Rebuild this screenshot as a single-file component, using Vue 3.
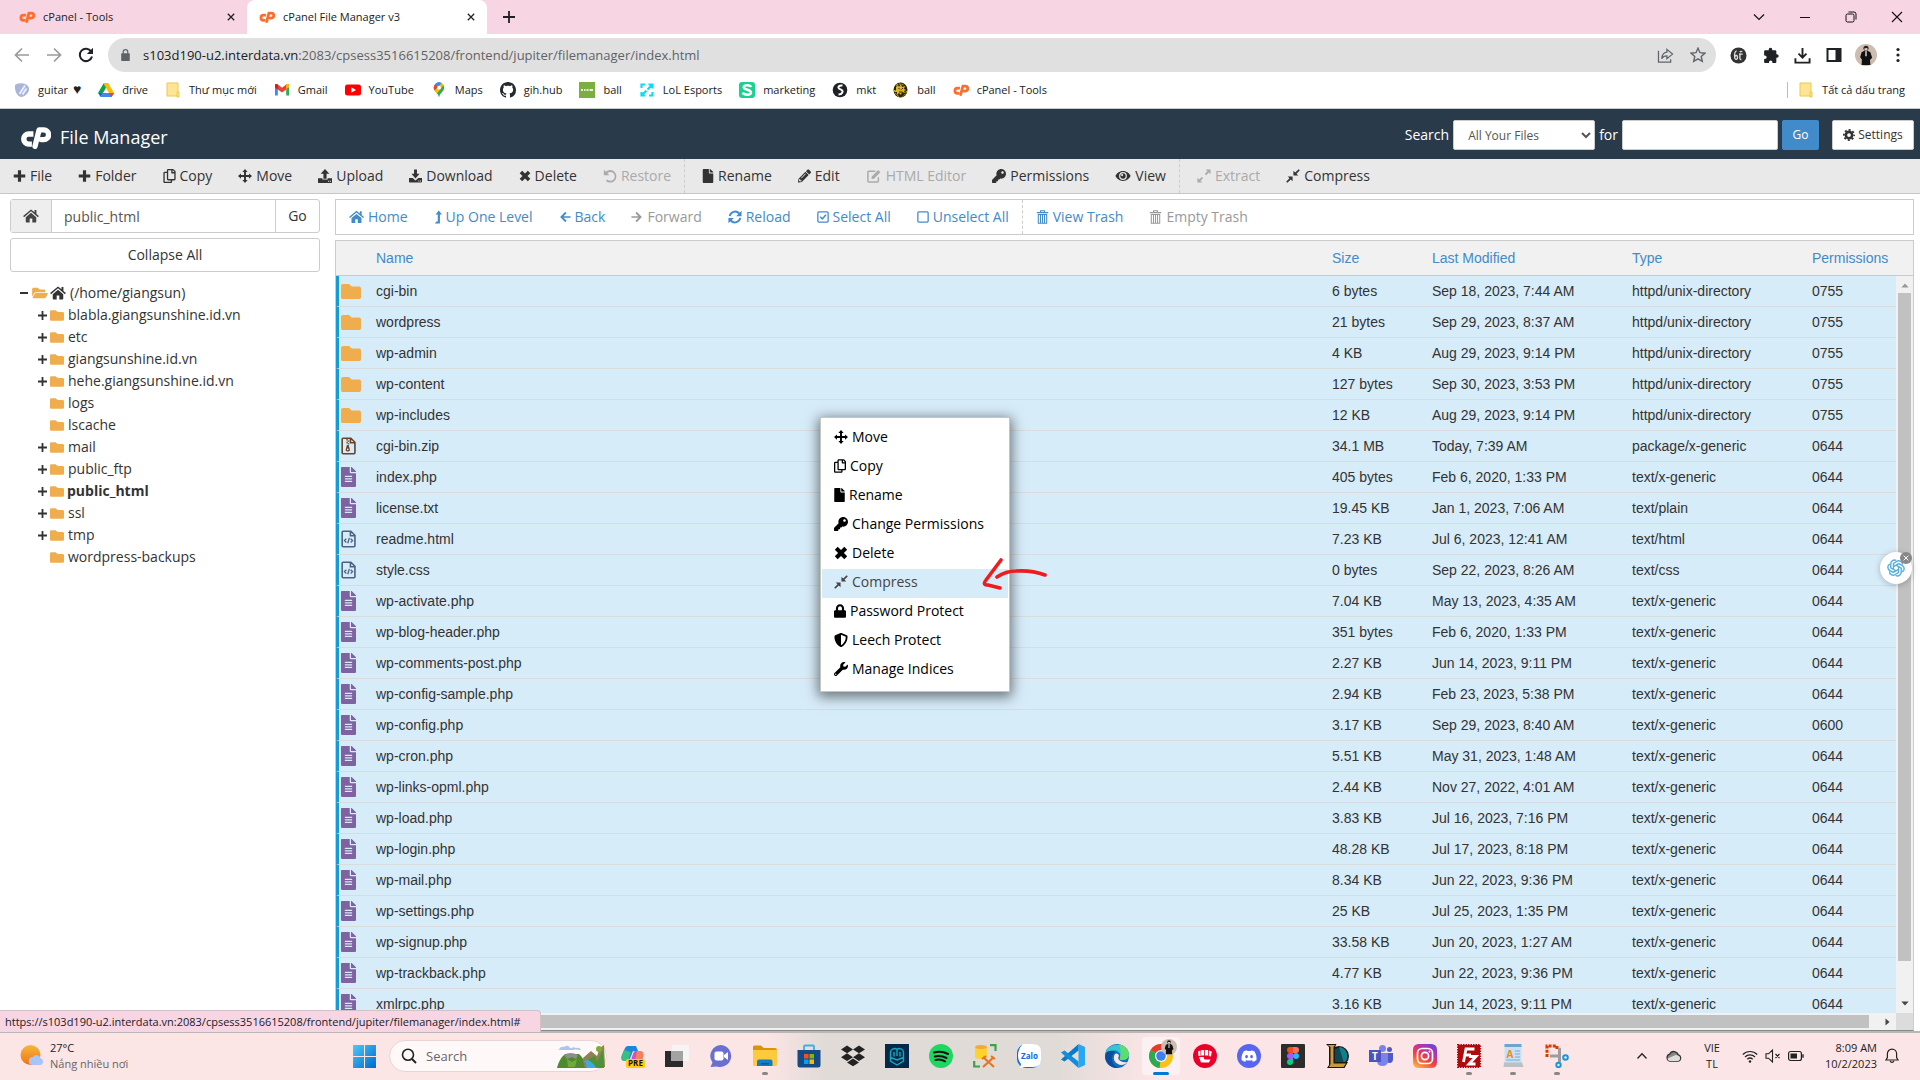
<script setup>
import { h } from 'vue'

const CP = '<g fill="none" stroke="currentColor" stroke-width="5.2" stroke-linejoin="round"><path d="M13 7.600H8.500a4.900 4.900 0 0 0 0 9.800H11.500"/><path d="M14.500 19.500 18.500 3.600H23a4.700 4.700 0 0 1 0 9.400H20.500" stroke-linecap="round"/></g>'
const DOC = '<path d="M224 136V0H24C10.700 0 0 10.700 0 24v464c0 13.300 10.700 24 24 24h336c13.300 0 24-10.700 24-24V160H248c-13.200 0-24-10.800-24-24z'
const SHEET = '<path d="M2 1.200h7.200l3.800 3.800v9.800a.9.9 0 0 1-.9.9H2a.9.9 0 0 1-.9-.9V2.100a.9.9 0 0 1 .9-.9zM8.800 1.200v4.200H13" fill="none" stroke="currentColor" stroke-width="1.500"/>'
const AVATAR = '<circle cx="10" cy="10" r="10" fill="#cdbcb0"/><circle cx="10" cy="3.800" r="2.300" fill="#26201f"/><path d="M8.600 3.800h2.800v2.400H8.600z" fill="#e6cdbb"/><path d="M6 7.500l3-1.500h2l3 1.500 1.600 5-2 2 .4 4.500H6l.3-5-1.600-2z" fill="#111"/><path d="M9.400 6.200h1.200v5H9.400z" fill="#eee"/>'

// name: [viewBox, markup]
const icons = {
  cp: ['0 0 30 22', CP],
  plus: ['0 0 14 14', '<path d="M5.300.8h3.400v4.500h4.500v3.400H8.700v4.500H5.300V8.700H.8V5.300h4.500z"/>'],
  treeplus: ['0 0 10 10', '<path d="M4 0h2v4h4v2H6v4H4V6H0V4h4z"/>'],
  treeminus: ['0 0 10 10', '<path d="M1 4h8v2H1z"/>'],
  copy: ['0 0 448 512', '<path d="M433.941 65.941l-51.882-51.882A48 48 0 0 0 348.118 0H176c-26.510 0-48 21.490-48 48v48H48c-26.510 0-48 21.490-48 48v320c0 26.510 21.490 48 48 48h224c26.510 0 48-21.490 48-48v-48h80c26.510 0 48-21.490 48-48V99.882a48 48 0 0 0-14.059-33.941zM266 464H54a6 6 0 0 1-6-6V150a6 6 0 0 1 6-6h74v224c0 26.510 21.490 48 48 48h96v42a6 6 0 0 1-6 6zm128-96H182a6 6 0 0 1-6-6V54a6 6 0 0 1 6-6h106v88c0 13.255 10.745 24 24 24h88v202a6 6 0 0 1-6 6zm6-256h-64V48h9.632c1.591 0 3.117.632 4.243 1.757l48.368 48.368a6 6 0 0 1 1.757 4.243V112z"/>'],
  move: ['0 0 16 16', '<path d="M8 0l3 3.400H9.100v3.500h3.500V5L16 8l-3.400 3V9.100H9.100v3.500H11L8 16l-3-3.400h1.900V9.100H3.400V11L0 8l3.400-3v1.900h3.500V3.400H5z"/>'],
  upload: ['0 0 16 16', '<path d="M8 0l5 5.400h-3.200V11H6.200V5.400H3z"/><path d="M0 10.500h5V12h6v-1.500h5V15a1 1 0 0 1-1 1H1a1 1 0 0 1-1-1z"/><path d="M11.500 13.500h1.200v1.200h-1.200zM13.500 13.500h1.200v1.200h-1.200z" fill="#e9e9e9"/>'],
  download: ['0 0 16 16', '<path d="M6.200 0h3.600v5.200H13L8 11 3 5.200h3.200z"/><path d="M0 10.500h4.500L8 13.500l3.500-3H16V15a1 1 0 0 1-1 1H1a1 1 0 0 1-1-1z"/><path d="M11.500 13.500h1.200v1.200h-1.200zM13.500 13.500h1.200v1.200h-1.200z" fill="#e9e9e9"/>'],
  times: ['0 0 14 14', '<path d="M3.700.8L7 4.100 10.300.8l2.900 2.900L9.900 7l3.300 3.300-2.900 2.900L7 9.900l-3.300 3.300L.8 10.300 4.100 7 .8 3.700z"/>'],
  undo: ['0 0 16 16', '<path d="M1 .8V7h6.200L5 4.800A5 5 0 1 1 5 12l-1.700 1.700A7.200 7.200 0 1 0 3.300 3z"/>'],
  file: ['0 0 384 512', DOC + 'm160-14.100v6.100H256V0h6.100c6.400 0 12.500 2.500 17 7l97.900 98c4.500 4.500 7 10.600 7 16.900z"/>'],
  pencil: ['0 0 512 512', '<path d="M497.900 142.100l-46.100 46.100c-4.700 4.700-12.300 4.700-17 0l-111-111c-4.700-4.700-4.700-12.300 0-17l46.100-46.100c18.700-18.700 49.100-18.700 67.900 0l60.100 60.100c18.800 18.700 18.800 49.100 0 67.900zM284.200 99.800L21.600 362.400.4 483.900c-2.900 16.400 11.400 30.600 27.800 27.800l121.500-21.300 262.600-262.600c4.700-4.700 4.700-12.300 0-17l-111-111c-4.800-4.700-12.400-4.700-17.100 0zM124.100 339.900c-5.500-5.500-5.500-14.300 0-19.800l154-154c5.500-5.500 14.300-5.500 19.800 0s5.500 14.300 0 19.800l-154 154c-5.500 5.500-14.300 5.500-19.800 0zM88 424h48v36.300l-64.500 11.300-31.100-31.100L51.700 376H88v48z"/>'],
  editbox: ['0 0 16 16', '<path d="M9.500 2.500H2.200A1.200 1.200 0 0 0 1 3.700v10a1.200 1.200 0 0 0 1.200 1.200h9.600a1.200 1.200 0 0 0 1.200-1.200V9.500" fill="none" stroke="currentColor" stroke-width="1.700"/><path d="M5 11.500l.5-3L12.800 1.200l2.400 2.400L8 11z"/>'],
  key: ['0 0 512 512', '<path d="M512 176.001C512 273.203 433.202 352 336 352c-11.220 0-22.190-1.062-32.827-3.069l-24.012 27.014A23.999 23.999 0 0 1 261.223 384H224v40c0 13.255-10.745 24-24 24h-40v40c0 13.255-10.745 24-24 24H24c-13.255 0-24-10.745-24-24v-78.059c0-6.365 2.529-12.470 7.029-16.971l161.802-161.802C163.108 213.814 160 195.271 160 176 160 78.798 238.797.001 335.999 0 433.488-.001 512 78.511 512 176.001zM336 128c0 26.510 21.490 48 48 48s48-21.490 48-48-21.490-48-48-48-48 21.490-48 48z"/>'],
  eye: ['0 0 18 14', '<path d="M9 1.500C4.800 1.500 1.600 4.500.5 7c1.100 2.500 4.300 5.500 8.500 5.500s7.400-3 8.500-5.500C16.400 4.500 13.200 1.500 9 1.500z"/><circle cx="9" cy="7" r="4.400" fill="#e9e9e9"/><circle cx="9" cy="7" r="3"/><circle cx="8" cy="6" r="1.200" fill="#e9e9e9"/>'],
  expand: ['0 0 16 16', '<path d="M10 .5h5.500V6l-2-2-3 3L9 5.500l3-3zM6 15.500H.5V10l2 2 3-3L7 10.500l-3 3z"/>'],
  compress: ['0 0 16 16', '<path d="M8.500 7.500V2l2 2L14.500.2l1.300 1.300L12 5.500l2 2zM7.500 8.500V14l-2-2-4 3.800-1.300-1.300L4 10.500l-2-2z"/>'],
  home: ['0 0 18 16', '<path d="M9 4.300l6 5V14.500a.8.8 0 0 1-.8.8h-3.700v-4.500h-3v4.500H3.800a.8.800 0 0 1-.8-.8V9.300z"/><path d="M9 .5L13 3.800V1.200h2.200v4.500L18 8l-1.100 1.300L9 2.700 1.100 9.300 0 8z"/>'],
  levelup: ['0 0 10 16', '<path d="M6 0l4 5H7.400v11H1l2-2.300h1.700V5H2z"/>'],
  left: ['0 0 14 14', '<path d="M7.300 1L8.800 2.500 5.300 6H13.500v2H5.300l3.500 3.500L7.300 13l-6-6z"/>'],
  right: ['0 0 14 14', '<path d="M6.700 1L5.200 2.500 8.700 6H.5v2h8.200l-3.500 3.500L6.700 13l6-6z"/>'],
  reload: ['0 0 16 16', '<path d="M2 7A6.200 6.200 0 0 1 12.800 4M14 9A6.200 6.200 0 0 1 3.200 12" fill="none" stroke="currentColor" stroke-width="2.200"/><path d="M15.500.8V7H9.300zM.5 15.200V9h6.200z"/>'],
  check: ['0 0 14 14', '<rect x="1" y="1" width="12" height="12" rx="1.200" fill="none" stroke="currentColor" stroke-width="1.500"/><path d="M3.800 6.800L6.200 9.300 10.500 4.500" fill="none" stroke="currentColor" stroke-width="1.800"/>'],
  square: ['0 0 14 14', '<rect x="1" y="1" width="12" height="12" rx="1.200" fill="none" stroke="currentColor" stroke-width="1.500"/>'],
  trash: ['0 0 14 16', '<path d="M.5 3h13M4.800 3V.9h4.400V3M2.200 5.200V15.200h9.600V5.200zM4.700 5v10M7 5v10M9.300 5v10" fill="none" stroke="currentColor" stroke-width="1.200"/>'],
  folder: ['0 64 512 384', '<path d="M464 128H272l-64-64H48C21.490 64 0 85.490 0 112v288c0 26.510 21.490 48 48 48h416c26.510 0 48-21.490 48-48V176c0-26.510-21.490-48-48-48z" fill="#f0ad4e"/>'],
  folderopen: ['0 0 576 512', '<path fill="#f0ad4e" d="M572.694 292.093L500.270 416.248A63.997 63.997 0 0 1 444.989 448H45.025c-18.523 0-30.064-20.093-20.731-36.093l72.424-124.155A64 64 0 0 1 152 256h399.964c18.523 0 30.064 20.093 20.730 36.093zM152 224h328v-48c0-26.510-21.490-48-48-48H272l-64-64H48C21.490 64 0 85.490 0 112v278.046l69.077-118.418C86.214 242.250 117.989 224 152 224z"/>'],
  doc: ['0 0 384 512', DOC + 'm64 236c0 6.600-5.400 12-12 12H108c-6.600 0-12-5.400-12-12v-8c0-6.600 5.400-12 12-12h168c6.600 0 12 5.400 12 12v8zm0-64c0 6.600-5.400 12-12 12H108c-6.600 0-12-5.400-12-12v-8c0-6.600 5.400-12 12-12h168c6.600 0 12 5.400 12 12v8zm0-72v8c0 6.600-5.400 12-12 12H108c-6.600 0-12-5.400-12-12v-8c0-6.600 5.400-12 12-12h168c6.600 0 12 5.400 12 12zm96-114.100v6.100H256V0h6.100c6.400 0 12.500 2.500 17 7l97.900 98c4.500 4.500 7 10.600 7 16.900z" fill="#7f62a1"/>'],
  zip: ['0 0 14 17', '<g color="#6b4226">' + SHEET + '<path d="M5 2h1.300v1.300H5zM6.300 3.300h1.300v1.300H6.300zM5 4.600h1.300v1.300H5zM6.300 5.900h1.300v1.300H6.300zM5.500 7.500h1.600l1.100 3.700a1.900 1.900 0 1 1-3.700 0z" fill="#6b4226"/><circle cx="6.300" cy="11.600" r=".8" fill="#d7ecf9"/></g>'],
  code: ['0 0 14 17', '<g color="#4a6384">' + SHEET + '<path d="M5 8.200L3.200 10 5 11.800M9 8.200l1.800 1.800L9 11.800M7.800 7.500l-1.500 5" fill="none" stroke="#4a6384" stroke-width="1.200"/></g>'],
  lock: ['0 0 448 512', '<path d="M400 224h-24v-72C376 68.200 307.800 0 224 0S72 68.200 72 152v72H48c-26.500 0-48 21.500-48 48v192c0 26.500 21.500 48 48 48h352c26.500 0 48-21.500 48-48V272c0-26.500-21.500-48-48-48zm-104 0H152v-72c0-39.700 32.300-72 72-72s72 32.300 72 72v72z"/>'],
  shield: ['0 0 512 512', '<path d="M466.500 83.700l-192-80a48.150 48.150 0 0 0-36.900 0l-192 80C27.700 91.100 16 108.600 16 128c0 198.500 114.500 335.700 221.500 380.300 11.800 4.900 25.100 4.900 36.900 0C360.100 472.600 496 349.300 496 128c0-19.400-11.700-36.900-29.500-44.300zM256.100 446.300l-.1-381 175.900 73.300c-3.300 151.400-82.100 261.100-175.800 307.700z"/>'],
  wrench: ['0 0 512 512', '<path d="M507.730 109.100c-2.240-9.030-13.540-12.090-20.120-5.510l-74.360 74.360-67.880-11.310-11.310-67.880 74.360-74.360c6.620-6.620 3.430-17.900-5.660-20.160-47.380-11.740-99.550.91-136.580 37.930-39.640 39.640-50.550 97.100-34.050 147.200L18.740 402.760c-24.990 24.990-24.990 65.510 0 90.500 24.990 24.990 65.510 24.990 90.500 0l213.210-213.210c50.120 16.710 107.470 5.680 147.370-34.220 37.070-37.070 49.700-89.320 37.910-136.730zM64 472c-13.250 0-24-10.750-24-24 0-13.260 10.750-24 24-24s24 10.740 24 24c0 13.250-10.750 24-24 24z"/>'],
  gear: ['0 0 16 16', '<circle cx="8" cy="8" r="4.200" fill="none" stroke="currentColor" stroke-width="3.400"/><circle cx="8" cy="8" r="6.800" fill="none" stroke="currentColor" stroke-width="2.400" stroke-dasharray="2.670 2.670" stroke-dashoffset="1.330"/>'],
  // browser chrome
  x: ['0 0 10 10', '<path d="M1 1l8 8M9 1L1 9" stroke="currentColor" stroke-width="1.600"/>'],
  thinx: ['0 0 12 12', '<path d="M1 1l10 10M11 1L1 11" stroke="currentColor" stroke-width="1.100"/>'],
  newtab: ['0 0 12 12', '<path d="M6 0v12M0 6h12" stroke="currentColor" stroke-width="1.800"/>'],
  chev: ['0 0 12 12', '<path d="M1 3.500l5 5 5-5" fill="none" stroke="currentColor" stroke-width="1.200"/>'],
  min: ['0 0 12 12', '<path d="M1 6.500h10" stroke="currentColor"/>'],
  restore: ['0 0 12 12', '<rect x="1" y="3" width="8" height="8" rx="1.500" fill="none" stroke="currentColor"/><path d="M3.500 1H9a2 2 0 0 1 2 2v5.500" fill="none" stroke="currentColor"/>'],
  back: ['0 0 16 16', '<path d="M15 8H2M8 1.500L1.500 8 8 14.500" fill="none" stroke="currentColor" stroke-width="1.700"/>'],
  fwd: ['0 0 16 16', '<path d="M1 8h13M8 1.500L14.500 8 8 14.500" fill="none" stroke="currentColor" stroke-width="1.700"/>'],
  refresh: ['0 0 16 16', '<path d="M13.200 4.500A6.200 6.200 0 1 0 14 9.500" fill="none" stroke="currentColor" stroke-width="2"/><path d="M15 .8V7H8.800z"/>'],
  padlock: ['0 0 10 14', '<rect x="0" y="5" width="10" height="9" rx="1"/><path d="M2.300 6V3.500a2.700 2.700 0 0 1 5.400 0V6" fill="none" stroke="currentColor" stroke-width="1.400"/>'],
  share: ['0 0 18 16', '<path d="M1.500 3v12h13v-3" fill="none" stroke="currentColor" stroke-width="1.300"/><path d="M10.500 1.500l6 5-6 5V8.500C7.500 8.500 6 9.500 5 11.500c.2-4 2.200-6.500 5.500-7z" fill="none" stroke="currentColor" stroke-width="1.300"/>'],
  star: ['0 0 16 16', '<path d="M8 1.200l2 4.500 4.900.5-3.700 3.300 1.100 4.800L8 11.800l-4.300 2.500 1.100-4.800L1.100 6.200 6 5.700z" fill="none" stroke="currentColor" stroke-width="1.400"/>'],
  puzzle: ['0 0 16 16', '<path d="M6.300 2.500a1.700 1.700 0 0 1 3.400 0V3h2.800a1 1 0 0 1 1 1v2.800h.5a1.700 1.700 0 0 1 0 3.400h-.5V14a1 1 0 0 1-1 1H9.800v-.8a1.600 1.600 0 0 0-3.200 0v.8H3a1 1 0 0 1-1-1v-2.700h.7a1.700 1.700 0 0 0 0-3.400H2V4a1 1 0 0 1 1-1h3.300z"/>'],
  dl: ['0 0 18 18', '<path d="M9 1v10M4.800 7L9 11.200 13.200 7M1.500 12v4.500h15V12" fill="none" stroke="currentColor" stroke-width="2"/>'],
  side: ['0 0 16 16', '<rect x="1.500" y="2" width="13" height="12" fill="none" stroke="currentColor" stroke-width="2"/><path d="M9.500 2H14v12H9.500z"/>'],
  dots: ['0 0 4 16', '<circle cx="2" cy="2.500" r="1.600"/><circle cx="2" cy="8" r="1.600"/><circle cx="2" cy="13.500" r="1.600"/>'],
  six: ['0 0 18 18', '<circle cx="9" cy="9" r="8.500" fill="#333"/><path d="M7 4c-2 1-2.500 4-2 7.500.5 2 3 2 3-.5S6 8.500 5.500 10M10.500 6.500V12q0 1.500 1.500 1.500M9.500 7.500h4M10.500 5.500q1-1.500 2.500-.5" fill="none" stroke="#ddd" stroke-width="1.400"/>'],
  avatar: ['0 0 20 20', AVATAR],
  // bookmark favicons
  pick: ['0 0 16 16', '<path d="M1 3.500C1.500 1.500 6 1 9 1.500c4 .5 6.500 3 6 6.500-.5 3-3.500 6-7 7C3 15 .5 9 1 3.500z" fill="#a9b6d8"/><path d="M5.500 12L11 3.500M8.500 12.500L12.500 6.500" stroke="#eef" stroke-width="1.800"/>'],
  drive: ['0 0 16 16', '<path d="M5.500 1.500h5L5 11H0z" fill="#0f9d58"/><path d="M5.500 1.500h5L16 11h-5z" fill="#fbbc04"/><path d="M2.700 15L5 11h11l-2.500 4z" fill="#4285f4"/><path d="M0 11l2.700 4L5 11z" fill="#1967d2"/><path d="M11 11h5l-2.500 4z" fill="#ea4335"/>'],
  bfolder: ['0 0 14 16', '<path d="M1 1h11v13H1z" fill="#ffe594" stroke="#ecc94e"/><path d="M11 10h2v5h-2z" fill="#ffe594" stroke="#ecc94e"/>'],
  gmail: ['0 0 16 16', '<path d="M1 3.500v10h2.800V6.500z" fill="#4285f4"/><path d="M15 3.500v10h-2.800V6.500z" fill="#34a853"/><path d="M1 3.500c0-1.500 1.600-1.800 2.800-1L8 5.700l4.200-3.200c1.200-.8 2.800-.5 2.800 1l-.5 2.300L8 10.500 1.300 5.800z" fill="#ea4335"/><path d="M12.200 2.500c1.200-.8 2.800-.5 2.800 1v1.700l-2.800 2z" fill="#fbbc04"/><path d="M1 3.500v1.700l2.800 2V2.500C2.600 1.700 1 2 1 3.500z" fill="#c5221f"/>'],
  yt: ['0 0 16 16', '<rect y="2.500" width="16" height="11" rx="2.500" fill="#f00"/><path d="M6.300 5.300v5.400L11 8z" fill="#fff"/>'],
  maps: ['0 0 12 16', '<path d="M6 .5a5.200 5.200 0 0 0-5.200 5.300C.8 9.500 5.200 11 6 15.500 6.800 11 11.200 9.500 11.200 5.800A5.200 5.200 0 0 0 6 .5z" fill="#34a853"/><path d="M6 .5A5.200 5.200 0 0 0 2 2.400l3 2.600L8.500 1.100A5 5 0 0 0 6 .5z" fill="#4285f4"/><path d="M2 2.400A5.200 5.200 0 0 0 1.700 8.600L5 5z" fill="#ea4335"/><path d="M1.700 8.600c.6 1 1.500 1.900 2.300 2.900L10.500 3.200 8.500 1.100z" fill="#fbbc04"/><path d="M2 2.400L5 5 8.500 1.100A5 5 0 0 0 2 2.400z" fill="#4285f4"/><circle cx="6" cy="5.700" r="1.900" fill="#fff"/>'],
  github: ['0 0 16 16', '<path d="M8 0C3.580 0 0 3.580 0 8c0 3.540 2.290 6.530 5.470 7.590.4.070.55-.170.55-.380 0-.190-.010-.820-.010-1.490-2.010.370-2.530-.490-2.690-.940-.090-.230-.480-.940-.820-1.130-.280-.150-.680-.520-.010-.530.630-.010 1.080.580 1.230.820.720 1.210 1.870.870 2.330.660.070-.520.280-.870.510-1.070-1.780-.2-3.640-.890-3.640-3.950 0-.870.310-1.590.820-2.150-.080-.2-.360-1.020.080-2.120 0 0 .670-.210 2.200.820.640-.180 1.320-.270 2-.270.680 0 1.360.090 2 .270 1.530-1.040 2.200-.820 2.200-.820.440 1.100.160 1.920.080 2.120.510.560.820 1.270.820 2.150 0 3.070-1.870 3.750-3.650 3.950.290.250.540.730.540 1.480 0 1.070-.010 1.930-.010 2.200 0 .210.150.460.550.380A8.013 8.013 0 0 0 16 8c0-4.420-3.580-8-8-8z" fill="#24292f"/>'],
  green: ['0 0 16 16', '<path d="M0 0h16v16H0z" fill="#7cae42"/><path d="M2 8h2M5 8h1.500M7.500 8h2M10.500 8H14" stroke="#e8f3d8" stroke-width="2"/>'],
  lol: ['0 0 16 16', '<path d="M2.500 6V2.500H6M13.500 10v3.500H10M2.500 10v3.500H6M9.500 2.500h4V6.500M8.500 7.500l5-5M3 13l4.500-4.500" fill="none" stroke="#0bdcf7" stroke-width="2.200"/>'],
  s: ['0 0 16 16', '<rect width="16" height="16" rx="3" fill="#1ad191"/><path d="M12.200 5C11 2.500 4.800 2.500 4.800 5.300c0 3 7.200 2 7.200 5.200 0 3-6.800 3-8.300.2" fill="none" stroke="#fff" stroke-width="2.500"/>'],
  globe: ['0 0 16 16', '<circle cx="8" cy="8" r="7.300" fill="#202124"/><path d="M10.500 3.500C7 3 5.500 5 7 6.500l3 1.700c1.500 1.500 0 4-3.500 4.300" fill="none" stroke="#fff" stroke-width="2"/>'],
  tiger: ['0 0 16 16', '<ellipse cx="7.500" cy="8" rx="7" ry="7.500" fill="#2b2410"/><path d="M3 5l2-2 1 2 2-3 1 3 3-1-1 3 2 1-2 1 1 2-3-1-1 3-2-2-2 2 0-3-3 0 2-2z" fill="#e0b521"/><path d="M1.500 8q1 5 4.500 6.500M13.500 9q-1 4-4 5.500M3 3.500q4-3 8.500 0" fill="none" stroke="#e0b521" stroke-dasharray="2 1"/><path d="M5.500 6l1.500 1.500M10 6L8.700 7.500M6 10h3.500" stroke="#2b2410"/>'],
  // taskbar
  sun: ['0 0 24 24', '<defs><linearGradient id="sg" x1="0" y1="0" x2="0" y2="1"><stop offset="0" stop-color="#f6b73c"/><stop offset="1" stop-color="#f07317"/></linearGradient></defs><circle cx="10.500" cy="11" r="10" fill="url(#sg)"/><path d="M13 21a4 4 0 0 1-.3-8 4.500 4.500 0 0 1 8 1.300A3.500 3.500 0 0 1 20.500 21z" fill="#a9c4f5"/>'],
  win: ['0 0 24 24', '<defs><linearGradient id="wg" x1="0" y1="0" x2="1" y2="1"><stop offset="0" stop-color="#4cc9fb"/><stop offset="1" stop-color="#0067c9"/></linearGradient></defs><path d="M1 1h10.500v10.500H1zM12.500 1H23v10.500H12.500zM1 12.500h10.500V23H1zM12.500 12.500H23V23H12.500z" fill="url(#wg)"/>'],
  search: ['0 0 16 16', '<circle cx="7" cy="6.700" r="5.500" fill="none" stroke="#222" stroke-width="1.600"/><path d="M11 11l4 4" stroke="#222" stroke-width="2"/>'],
  scene: ['0 0 48 26', '<path d="M2 7q1-4 5-3 4-3 6 1 4 0 4 2zM14 6q1-3 5-1 4-1 5 2z" fill="#a9c7e8"/><path d="M0 25q2-9 8-14h14q5 4 8 14z" fill="#4f8a2e"/><path d="M7 12q6-4 14 0l-2 4-4-2-5 2z" fill="#8b8f8e"/><path d="M10 16l5 3 5-3-2 8h-7z" fill="#72aa38"/><path d="M26 15l8-7 6 5 3-8 4-3 1 22H27z" fill="#8f8152"/><path d="M32 16l6-3 2 6 6-12 1 18H30z" fill="#4b9336"/><path d="M26 18q5 2 3 7h10q-2-5-8-8z" fill="#3ea9e4"/><circle cx="42" cy="6" r="3" fill="#7dac31"/>'],
  copilot: ['0 0 24 24', '<path d="M7 2h8l2 5h-5L8 17H4C0 17 0 14 1 11L4 4q1-2 3-2z" fill="#1c86dd"/><path d="M1 11L3 6l7 2-3 9H4C0 17 0 14 1 11z" fill="#35c184"/><path d="M14 7h4c4 0 5 3 4 6l-2 6H9l3-9q1-3 2-3z" fill="#d34fc4"/><path d="M19 7c3 0 4 3 3 6l-2 6-6-2 2-10z" fill="#f48158"/><rect x="5" y="15" width="19" height="9" rx="2" fill="#ffcb13"/><text x="14.500" y="22" text-anchor="middle" font-family="Open Sans, sans-serif" font-weight="700" font-size="8" fill="#111">PRE</text>'],
  taskview: ['0 0 24 24', '<path d="M7 1h17v16H7z" fill="#f5f5f5"/><path d="M0 7h18v16H0z" fill="#2b2b2b"/><path d="M6 7h12v10H6z" fill="#a3a3a3"/>'],
  chat: ['0 0 24 24', '<path d="M12 1a11 11 0 1 1-4 21.500L1.500 23l2-4.500A11 11 0 0 1 12 1z" fill="#6a6fd0"/><rect x="5.500" y="7.500" width="9" height="9" rx="2" fill="#fff"/><path d="M15 11l4-3v8l-4-3z" fill="#fff"/>'],
  explorer: ['0 0 24 24', '<path d="M0 3q0-1.500 1.500-1.500H8L10.500 4H22q2 0 2 2v6H0z" fill="#d9940b"/><path d="M0 6h24v14.500q0 1.500-1.500 1.500h-21Q0 22 0 20.500z" fill="#fdca3e"/><path d="M4 22v-4.500Q4 15.500 6 15.500h11.500q2 0 2 2V22z" fill="#127dc5"/><path d="M8 19h8v1.500H8z" fill="#0a5596"/>'],
  store: ['0 0 24 24', '<path d="M7 7V2.500Q7 1.500 8 1.500h8q1 0 1 1V7" fill="none" stroke="#35b1ec" stroke-width="1.800"/><path d="M.5 6h23v15q0 2.500-2.500 2.500H3Q.5 23.500.5 21z" fill="#164a87"/><path d="M7 10h4.500v4.500H7z" fill="#f25022"/><path d="M12.500 10H17v4.500h-4.500z" fill="#7fba00"/><path d="M7 15.500h4.500V20H7z" fill="#00a4ef"/><path d="M12.500 15.500H17V20h-4.500z" fill="#ffb900"/>'],
  dropbox: ['0 0 24 24', '<path d="M6 1.500l6 3.900-6 3.900-6-3.900zM18 1.500l6 3.900-6 3.900-6-3.900zM0 13.200l6-3.900 6 3.900-6 3.900zM18 9.300l6 3.900-6 3.900-6-3.900zM6 18.400l6-3.900 6 3.900-6 3.900z"/>'],
  pg: ['0 0 24 24', '<path d="M0 0h24v24H0z" fill="#06294a"/><path d="M5.500 8a4 4 0 0 1 6.500-2.500A4 4 0 0 1 18.500 8v9L12 21l-6.500-4zM12 5.500V12M5.500 13.500L12 16l6.500-2.500M9 8v4.500M15 8v4.500" fill="none" stroke="#12a8c0" stroke-width="1.400"/>'],
  spotify: ['0 0 24 24', '<circle cx="12" cy="12" r="12" fill="#1ed760"/><path d="M5 8.500q7.500-2 14 1.500M5.800 12.500q6-1.500 11.700 1.500M6.500 16q5-1.200 9.500 1.300" fill="none" stroke="#111" stroke-width="2" stroke-linecap="round"/>'],
  tools: ['0 0 24 24', '<path d="M2 3h12v11q-6 2-12 0z" fill="#ffd22e"/><ellipse cx="8" cy="3" rx="6" ry="2" fill="#f7a83a"/><path d="M17 1.200h5.500V7M1.200 17v5.500H7" fill="none" stroke="#3ca24b" stroke-width="2.200"/><path d="M10 13l11 10M21 13L10 23M9 15l4-3M18 12l4 3" stroke="#e8731c" stroke-width="2"/>'],
  zalo: ['0 0 24 24', '<rect width="24" height="24" rx="9" fill="#0a68f4"/><path d="M6 0h10q8 0 8 8v8q0 7-8 7H7l-4 1 1-4q-3-3-3-9T6 0z" fill="#fff"/><text x="12.500" y="14.500" text-anchor="middle" font-family="Open Sans, sans-serif" font-weight="700" font-size="8" fill="#0a68f4">Zalo</text>'],
  vscode: ['0 0 24 24', '<path d="M17.500 0L24 3v18l-6.500 3z" fill="#27a8f2"/><path d="M17.500 0v6.500L3.500 17.500 0 15.500 17.500 0z" fill="#0a7bc9"/><path d="M17.500 24v-6.500L3.500 6.500 0 8.500 17.500 24z" fill="#118ddc"/>'],
  edge: ['0 0 24 24', '<circle cx="12" cy="12" r="12" fill="#0f6ebd"/><path d="M1 8C4-1 18-2 23 7c3 6-1 9-5 9-3 0-4-1-3-2.500C17 8 10 5 6 7 3 8 1 10 0 12z" fill="#37c5d4"/><path d="M14 .2C22 2 25 8 23.500 12c-1 3-3 4-6 4-3 0-3-1-2.500-2.500C17 8 15 4 14 .2z" fill="#5fdc6e"/><path d="M10 10c-3 5 0 10 6 11 3 0 5-1 6.500-3-4 1-8-1-9-3-.8-1.500.3-2.500.5-3C13.500 9 11 9 10 10z" fill="#fbe5e6"/><path d="M9 9c-4 4-2 13 5 15C3 25-2 15 1 9c2-3 8-3 9-.5z" fill="#0d4e9c"/>'],
  chrome: ['0 0 24 24', '<circle cx="12" cy="12" r="12" fill="#fbc116"/><path d="M12 12L1.600 6A12 12 0 0 1 22.400 6z" fill="#e33b2e"/><path d="M12 12L1.600 6a12 12 0 0 0 9 18z" fill="#2da94f"/><circle cx="12" cy="12" r="6" fill="#fff"/><circle cx="12" cy="12" r="4.800" fill="#3d7ff0"/>'],
  fist: ['0 0 24 24', '<circle cx="12" cy="12" r="12" fill="#eb0029"/><path d="M5 7.500l2.500-1V12H5.500zM8.200 6h3v5.500h-3zM12 6h3v5.500h-3zM15.800 6.500l3 1L18 12.500l-2.200-.5zM6 13h4.500l1 2.500h6L16 18.500H8z" fill="#fff"/>'],
  discord: ['0 0 24 24', '<circle cx="12" cy="12" r="12" fill="#5865f2"/><path transform="translate(4.500 4.500) scale(.63)" fill="#fff" d="M20.317 4.370a19.790 19.790 0 0 0-4.885-1.515c-.211.375-.525.902-.687 1.287-1.845-.276-3.680-.276-5.487 0-.164-.393-.406-.912-.696-1.287A19.740 19.740 0 0 0 3.677 4.370C.533 9.046-.319 13.580.099 18.058c2.053 1.508 4.072 2.480 6.109 3.058.462-.630.873-1.295 1.226-1.994-.653-.248-1.315-.655-1.913-.998l.442-.325c3.928 1.793 8.180 1.793 12.061 0l.451.325c-.597.349-1.260.750-1.913.998.360.698.772 1.363 1.225 1.993 1.961-.607 4.034-1.550 6.087-3.057.500-5.177-.838-9.702-3.557-13.688zM8.020 15.331c-1.183 0-2.157-1.086-2.157-2.419s.956-2.419 2.157-2.419 2.176 1.095 2.157 2.419c0 1.333-.956 2.419-2.157 2.419zm7.975 0c-1.183 0-2.157-1.086-2.157-2.419s.955-2.419 2.157-2.419 2.176 1.095 2.157 2.419c0 1.333-.946 2.419-2.157 2.419z"/>'],
  figma: ['0 0 24 24', '<rect width="24" height="24" rx="1" fill="#2c2c2c"/><path d="M12 3H9a3 3 0 0 0 0 6h3z" fill="#f24e1e"/><path d="M12 3h3a3 3 0 0 1 0 6h-3z" fill="#ff7262"/><path d="M12 9H9a3 3 0 0 0 0 6h3z" fill="#a259ff"/><circle cx="15" cy="12" r="3" fill="#1abcfe"/><path d="M12 15H9a3 3 0 1 0 3 3z" fill="#0acf83"/>'],
  league: ['0 0 24 24', '<circle cx="14" cy="12" r="9" fill="#0c4a57" stroke="#1a1a14" stroke-width="2"/><path d="M14 3a9 9 0 0 1 5 16z" fill="#127f8b"/><path d="M1 0h10.500L10 3v15h13l-3.500 6H2l2-3V3z" fill="#1d1708"/><path d="M2.500 1H10L8.500 3v16.500H21L18.500 23H4l1.500-3V3z" fill="#c79a3c"/>'],
  teams: ['0 0 24 24', '<circle cx="13.500" cy="4.500" r="3.500" fill="#7b83eb"/><circle cx="20.500" cy="5.500" r="2.500" fill="#5059c9"/><path d="M17 9h7v6q0 4-3.500 4T17 16z" fill="#5059c9"/><path d="M8 9h11v7q0 6-5.500 6T8 17z" fill="#7b83eb"/><path d="M0 6h12v12H0z" fill="#4b53bc"/><text x="6" y="15.500" text-anchor="middle" font-family="Open Sans, sans-serif" font-weight="700" font-size="10" fill="#fff">T</text>'],
  insta: ['0 0 24 24', '<defs><linearGradient id="ig" x1=".2" y1="1" x2=".8" y2="0"><stop offset="0" stop-color="#fdb13f"/><stop offset=".4" stop-color="#f0413f"/><stop offset=".7" stop-color="#c62fa0"/><stop offset="1" stop-color="#6a45d8"/></linearGradient></defs><rect width="24" height="24" rx="5.500" fill="url(#ig)"/><rect x="4.500" y="4.500" width="15" height="15" rx="4.500" fill="none" stroke="#fff" stroke-width="1.700"/><circle cx="12" cy="12" r="3.600" fill="none" stroke="#fff" stroke-width="1.700"/><circle cx="16.500" cy="7.500" r="1" fill="#fff"/>'],
  fz: ['0 0 24 24', '<path d="M1 1h22v22H1z" fill="#b10a0d" stroke="#b10a0d" stroke-width="2" stroke-dasharray="1.500 1"/><path d="M6.500 18L9 5h8.500M8 11h6M12 12.500h7l-7 7.500h6.500" fill="none" stroke="#fff" stroke-width="2.800"/>'],
  wordpad: ['0 0 24 24', '<path d="M3.500 1h17v18h-17z" fill="#c7e1f5"/><path d="M3.500 0h17v3h-17z" fill="#6fa5cc"/><path d="M14 7h5M14 10h5M14 13h5M5 16h14" stroke="#7fa9cb"/><path d="M3 18.500h18l1.500 4.500h-20z" fill="#b9c0c6"/><text x="9" y="13.500" text-anchor="middle" font-family="Open Sans, sans-serif" font-weight="700" font-size="10" fill="#f08a24">A</text>'],
  snip: ['0 0 24 24', '<path d="M2 13V2h10v4" fill="none" stroke="#d83b01" stroke-width="3" stroke-dasharray="3 1.200"/><path d="M5 12h11M14.500 4v14" stroke="#9d9d9d" stroke-width="3"/><circle cx="20.500" cy="13.500" r="2.300" fill="none" stroke="#1597de" stroke-width="2"/><circle cx="13.500" cy="21" r="2.200" fill="none" stroke="#1597de" stroke-width="2"/>'],
  caret: ['0 0 12 12', '<path d="M1.500 8.500L6 3.800l4.500 4.700" fill="none" stroke="#222" stroke-width="1.300"/>'],
  cloud: ['0 0 16 16', '<path d="M4 13.200a3.600 3.600 0 0 1-.3-7A4.500 4.500 0 0 1 12.200 7a3.200 3.200 0 0 1 0 6.200z" fill="#888" stroke="#333" stroke-width="1.300"/><path d="M4 13q-2.500-.5-2.500-2.500l8-3.500q4 0 4.500 2.500T12 13z" fill="#ddd"/>'],
  wifi: ['0 0 16 16', '<path d="M.8 6.500a10.200 10.200 0 0 1 14.400 0M3 9a7 7 0 0 1 10 0M5.300 11.300a3.900 3.900 0 0 1 5.400 0" fill="none" stroke="#222" stroke-width="1.200"/><circle cx="8" cy="13.500" r="1.200" fill="#222"/>'],
  mute: ['0 0 16 16', '<path d="M1 5.800h2.500L7.500 2v12l-4-3.800H1zM10.500 6l4 4M14.500 6l-4 4" fill="none" stroke="#222" stroke-width="1.100"/>'],
  battery: ['0 0 16 16', '<rect x=".6" y="3.500" width="12.800" height="9" rx="2" fill="none" stroke="#222" stroke-width="1.200"/><path d="M2.500 5.500h6.500v5H2.500zM14.300 6.300h1.400v3.400h-1.400z" fill="#222"/>'],
  bell: ['0 0 16 16', '<path d="M8 1.200a4.600 4.600 0 0 1 4.600 4.600V9.500l1.400 2.500H2L3.400 9.500V5.800A4.600 4.600 0 0 1 8 1.200zM6.200 13a1.900 1.900 0 0 0 3.600 0" fill="none" stroke="#222" stroke-width="1.200"/>'],
  ai: ['0 0 24 24', '<g fill="none" stroke="#55aede" stroke-width="1.700">' + [0, 60, 120, 180, 240, 300].map(a => `<path transform="rotate(${a} 12 12)" d="M9 13.700V6.500L13 4.200A4.300 4.300 0 0 1 19.800 8"/>`).join('') + '</g>'],
  up: ['0 0 10 6', '<path d="M5 .5L9.500 5.500h-9z"/>'],
  down: ['0 0 10 6', '<path d="M5 5.500L.5.500h9z"/>'],
  tri: ['0 0 6 10', '<path d="M5.500 5L.5.500v9z"/>'],
}

const Icon = (props) => h('svg', {
  viewBox: icons[props.name][0],
  width: props.w || 16,
  height: props.h || props.w || 16,
  fill: 'currentColor',
  'aria-hidden': 'true',
  innerHTML: icons[props.name][1],
})
Icon.props = ['name', 'w', 'h']

const bookmarks = [
  ['pick', 'guitar', '♥'], ['drive', 'đrive'], ['bfolder', 'Thư mục mới'], ['gmail', 'Gmail'], ['yt', 'YouTube'],
  ['maps', 'Maps'], ['github', 'gih.hub'], ['green', 'ball'], ['lol', 'LoL Esports'], ['s', 'marketing'],
  ['globe', 'mkt'], ['tiger', 'ball'], ['cp', 'cPanel - Tools'],
]

// icon, label, icon width, disabled, separator before
const tools = [
  ['plus', 'File', 13], ['plus', 'Folder', 13], ['copy', 'Copy', 13], ['move', 'Move', 14], ['upload', 'Upload', 14],
  ['download', 'Download', 13], ['times', 'Delete', 12], ['undo', 'Restore', 14, true],
  ['file', 'Rename', 12, false, true], ['pencil', 'Edit', 13], ['editbox', 'HTML Editor', 16, true], ['key', 'Permissions', 14],
  ['eye', 'View', 16], ['expand', 'Extract', 14, true, true], ['compress', 'Compress', 14],
]
const nav = [
  ['home', 'Home', 15], ['levelup', 'Up One Level', 8], ['left', 'Back', 12], ['right', 'Forward', 12, true],
  ['reload', 'Reload', 14], ['check', 'Select All', 12], ['square', 'Unselect All', 12],
  ['trash', 'View Trash', 13, false, true], ['trash', 'Empty Trash', 13, true],
]
const tree = [
  ['blabla.giangsunshine.id.vn', true], ['etc', true], ['giangsunshine.id.vn', true], ['hehe.giangsunshine.id.vn', true],
  ['logs', false], ['lscache', false], ['mail', true], ['public_ftp', true], ['public_html', true], ['ssl', true],
  ['tmp', true], ['wordpress-backups', false],
]
const DIR = 'httpd/unix-directory'
const GEN = 'text/x-generic'
const files = [
  ['folder', 'cgi-bin', '6 bytes', 'Sep 18, 2023, 7:44 AM', DIR, '0755'],
  ['folder', 'wordpress', '21 bytes', 'Sep 29, 2023, 8:37 AM', DIR, '0755'],
  ['folder', 'wp-admin', '4 KB', 'Aug 29, 2023, 9:14 PM', DIR, '0755'],
  ['folder', 'wp-content', '127 bytes', 'Sep 30, 2023, 3:53 PM', DIR, '0755'],
  ['folder', 'wp-includes', '12 KB', 'Aug 29, 2023, 9:14 PM', DIR, '0755'],
  ['zip', 'cgi-bin.zip', '34.1 MB', 'Today, 7:39 AM', 'package/x-generic', '0644'],
  ['doc', 'index.php', '405 bytes', 'Feb 6, 2020, 1:33 PM', GEN, '0644'],
  ['doc', 'license.txt', '19.45 KB', 'Jan 1, 2023, 7:06 AM', 'text/plain', '0644'],
  ['code', 'readme.html', '7.23 KB', 'Jul 6, 2023, 12:41 AM', 'text/html', '0644'],
  ['code', 'style.css', '0 bytes', 'Sep 22, 2023, 8:26 AM', 'text/css', '0644'],
  ['doc', 'wp-activate.php', '7.04 KB', 'May 13, 2023, 4:35 AM', GEN, '0644'],
  ['doc', 'wp-blog-header.php', '351 bytes', 'Feb 6, 2020, 1:33 PM', GEN, '0644'],
  ['doc', 'wp-comments-post.php', '2.27 KB', 'Jun 14, 2023, 9:11 PM', GEN, '0644'],
  ['doc', 'wp-config-sample.php', '2.94 KB', 'Feb 23, 2023, 5:38 PM', GEN, '0644'],
  ['doc', 'wp-config.php', '3.17 KB', 'Sep 29, 2023, 8:40 AM', GEN, '0600'],
  ['doc', 'wp-cron.php', '5.51 KB', 'May 31, 2023, 1:48 AM', GEN, '0644'],
  ['doc', 'wp-links-opml.php', '2.44 KB', 'Nov 27, 2022, 4:01 AM', GEN, '0644'],
  ['doc', 'wp-load.php', '3.83 KB', 'Jul 16, 2023, 7:16 PM', GEN, '0644'],
  ['doc', 'wp-login.php', '48.28 KB', 'Jul 17, 2023, 8:18 PM', GEN, '0644'],
  ['doc', 'wp-mail.php', '8.34 KB', 'Jun 22, 2023, 9:36 PM', GEN, '0644'],
  ['doc', 'wp-settings.php', '25 KB', 'Jul 25, 2023, 1:35 PM', GEN, '0644'],
  ['doc', 'wp-signup.php', '33.58 KB', 'Jun 20, 2023, 1:27 AM', GEN, '0644'],
  ['doc', 'wp-trackback.php', '4.77 KB', 'Jun 22, 2023, 9:36 PM', GEN, '0644'],
  ['doc', 'xmlrpc.php', '3.16 KB', 'Jun 14, 2023, 9:11 PM', GEN, '0644'],
]
const fileIconSize = { folder: [20, 15], zip: [15, 20], code: [15, 20], doc: [15, 20] }
const menu = [
  ['move', 'Move', 14], ['copy', 'Copy', 12], ['file', 'Rename', 11], ['key', 'Change Permissions', 14], ['times', 'Delete', 14],
  ['compress', 'Compress', 14], ['lock', 'Password Protect', 12], ['shield', 'Leech Protect', 14], ['wrench', 'Manage Indices', 14],
]
const apps = ['copilot', 'taskview', 'chat', 'explorer', 'store', 'dropbox', 'pg', 'spotify', 'tools', 'zalo', 'vscode', 'edge',
  'chrome', 'fist', 'discord', 'figma', 'league', 'teams', 'insta', 'fz', 'wordpad', 'snip']
const running = ['explorer', 'fz', 'wordpad', 'snip']
</script>

<template>
  <div class="screen">
    <header class="tabs">
      <div class="tab"><Icon name="cp" w="16" class="orange" /><span>cPanel - Tools</span><button aria-label="Close tab"><Icon name="x" w="8" /></button></div>
      <div class="tab active"><Icon name="cp" w="16" class="orange" /><span>cPanel File Manager v3</span><button aria-label="Close tab"><Icon name="x" w="8" /></button></div>
      <button class="newtab" aria-label="New tab"><Icon name="newtab" w="12" /></button>
      <div class="winctl">
        <button aria-label="Search tabs"><Icon name="chev" w="12" /></button>
        <button aria-label="Minimize"><Icon name="min" w="12" /></button>
        <button aria-label="Restore"><Icon name="restore" w="12" /></button>
        <button aria-label="Close"><Icon name="thinx" w="12" /></button>
      </div>
    </header>

    <div class="urlbar">
      <button class="dim" aria-label="Back"><Icon name="back" w="16" /></button>
      <button class="dim" aria-label="Forward"><Icon name="fwd" w="16" /></button>
      <button aria-label="Reload page"><Icon name="refresh" w="16" /></button>
      <div class="omnibox">
        <Icon name="padlock" w="9" h="12" />
        <span class="url"><b>s103d190-u2.interdata.vn</b>:2083/cpsess3516615208/frontend/jupiter/filemanager/index.html</span>
        <Icon name="share" w="17" h="15" />
        <Icon name="star" w="16" />
      </div>
      <div class="ext">
        <button aria-label="Extension"><Icon name="six" w="17" /></button>
        <button aria-label="Extensions"><Icon name="puzzle" w="17" /></button>
        <button aria-label="Downloads"><Icon name="dl" w="17" /></button>
        <button aria-label="Side panel"><Icon name="side" w="16" /></button>
        <button aria-label="Profile"><Icon name="avatar" w="22" /></button>
        <button aria-label="Menu"><Icon name="dots" w="4" h="16" /></button>
      </div>
    </div>

    <nav class="bookmarks">
      <a v-for="(b, i) in bookmarks" :key="i" href="#" :class="{ orangeicon: b[0] === 'cp' }"><Icon :name="b[0]" w="16" /><span>{{ b[1] }}<span v-if="b[2]" class="heart">{{ b[2] }}</span></span></a>
      <a href="#" class="all"><Icon name="bfolder" w="16" />Tất cả dấu trang</a>
    </nav>

    <div class="apphead">
      <Icon name="cp" w="31" h="23" />
      <h1>File Manager</h1>
      <form class="searchform" @submit.prevent>
        <label for="scope">Search</label>
        <select id="scope"><option>All Your Files</option></select>
        <label for="query">for</label>
        <input id="query" type="text" />
        <button class="go">Go</button>
        <button type="button" class="settings"><Icon name="gear" w="12" />Settings</button>
      </form>
    </div>

    <div class="toolbar">
      <button v-for="t in tools" :key="t[1]" class="tool" :class="{ off: t[3], sep: t[4] }" :disabled="t[3]">
        <Icon :name="t[0]" :w="t[2]" h="14" />{{ t[1] }}
      </button>
    </div>

    <main class="work">
      <aside class="side">
        <form class="path" @submit.prevent>
          <span class="homebox"><Icon name="home" w="16" h="14" /></span>
          <input type="text" value="public_html" aria-label="Path" />
          <button>Go</button>
        </form>
        <button class="collapse">Collapse All</button>
        <ul class="tree">
          <li class="root"><Icon name="treeminus" w="10" /><Icon name="folderopen" w="16" h="14" /><Icon name="home" w="16" h="14" /><span>(/home/giangsun)</span></li>
          <li v-for="n in tree" :key="n[0]" :class="{ current: n[0] === 'public_html' }">
            <Icon v-if="n[1]" name="treeplus" w="9" /><i v-else></i><Icon name="folder" w="14" h="11" /><span>{{ n[0] }}</span>
          </li>
        </ul>
      </aside>

      <section class="content">
        <div class="navbar">
          <button v-for="t in nav" :key="t[1]" class="tool" :class="{ off: t[3], sep: t[4] }" :disabled="t[3]">
            <Icon :name="t[0]" :w="t[2]" h="14" />{{ t[1] }}
          </button>
        </div>
        <div class="panel">
          <div class="listing">
            <div class="scroller">
              <table>
                <colgroup><col class="c-icon" /><col /><col class="c-size" /><col class="c-mod" /><col class="c-type" /><col class="c-perm" /></colgroup>
                <thead>
                  <tr><th></th><th>Name</th><th>Size</th><th>Last Modified</th><th>Type</th><th>Permissions</th></tr>
                </thead>
                <tbody>
                  <tr v-for="f in files" :key="f[1]">
                    <td><Icon :name="f[0]" :w="fileIconSize[f[0]][0]" :h="fileIconSize[f[0]][1]" /></td>
                    <td v-for="c in f.slice(1)" :key="c">{{ c }}</td>
                  </tr>
                </tbody>
              </table>
            </div>
            <div class="vbar">
              <div class="vhead"></div>
              <Icon name="up" w="8" h="5" class="faded" />
              <div class="vtrack"><div class="vthumb"></div></div>
              <Icon name="down" w="8" h="5" />
            </div>
          </div>
          <div class="hbar">
            <div class="htrack"><div class="hthumb"></div></div>
            <Icon name="tri" w="5" h="8" />
            <div class="corner"></div>
          </div>
        </div>
      </section>
    </main>

    <footer class="taskbar">
      <div class="weather"><Icon name="sun" w="24" /><div><p>27°C</p><p class="soft">Nắng nhiều nơi</p></div></div>
      <button class="start" aria-label="Start"><Icon name="win" w="25" /></button>
      <label class="search"><Icon name="search" w="16" /><input type="text" placeholder="Search" aria-label="Search" /><Icon name="scene" w="48" h="26" /></label>
      <div class="apps">
        <button v-for="a in apps" :key="a" :aria-label="a" :class="{ run: running.includes(a), front: a === 'chrome' }">
          <Icon :name="a" w="24" />
          <Icon v-if="a === 'chrome'" name="avatar" w="16" class="who" />
        </button>
      </div>
      <div class="tray">
        <Icon name="caret" w="12" /><Icon name="cloud" w="16" />
        <div class="lang"><p>VIE</p><p>TL</p></div>
        <div class="status"><Icon name="wifi" w="16" /><Icon name="mute" w="16" /><Icon name="battery" w="16" /></div>
        <div class="clock"><p>8:09 AM</p><p>10/2/2023</p></div>
        <Icon name="bell" w="16" />
      </div>
    </footer>

    <ul class="menu">
      <li v-for="m in menu" :key="m[1]" :class="{ hover: m[1] === 'Compress' }"><a href="#"><Icon :name="m[0]" :w="m[2]" h="14" />{{ m[1] }}</a></li>
    </ul>
    <svg class="arrow" width="70" height="40" viewBox="0 0 70 40" aria-hidden="true">
      <path d="M21 6L6 26Q2 31 8 31L20 34M17 23Q26 17 36 17Q52 16 65 21" fill="none" stroke="#ee1c1c" stroke-width="3.600" stroke-linecap="round" stroke-linejoin="round" />
    </svg>
    <button class="assistant" aria-label="Assistant"><Icon name="ai" w="20" /><span><Icon name="x" w="6" /></span></button>
    <div class="bubble">https://s103d190-u2.interdata.vn:2083/cpsess3516615208/frontend/jupiter/filemanager/index.html#</div>
  </div>
</template>

<style>
body { margin: 0; background: #fff; }
</style>

<style scoped>
* { box-sizing: border-box; }
.screen {
  position: relative; display: flex; flex-direction: column; height: 100vh; overflow: hidden;
  font: 14px/20px "Open Sans", "Noto Sans", sans-serif; color: #333; background: #fff;
}
svg { flex: none; display: block; }
button { font: inherit; color: inherit; background: none; border: 0; padding: 0; margin: 0; }
button, a { display: flex; align-items: center; }
a { color: inherit; text-decoration: none; }
p, ul, h1 { margin: 0; padding: 0; list-style: none; }

.tabs { display: flex; align-items: center; height: 34px; background: #f7d5e3; font-size: 11px; color: #202124; padding-left: 7px; flex: none; }
.tab { display: flex; align-items: center; width: 240px; height: 34px; padding: 0 12px; gap: 8px; }
.tab span { flex: 1; }
.tab.active { background: #fff; border-radius: 8px 8px 0 0; }
.orange { color: #ff6c2c; }
.newtab { margin-left: 16px; }
.winctl { margin-left: auto; display: flex; gap: 34px; padding-right: 17px; color: #111; }

.urlbar { display: flex; align-items: center; height: 40px; padding: 2px 6px 0 14px; gap: 16px; color: #202124; flex: none; }
.dim { color: #9a9a9a; }
.omnibox { flex: 1; display: flex; align-items: center; height: 34px; border-radius: 17px; background: #e0e0e0; padding: 0 10px 0 13px; gap: 16px; margin: 0 -10px 0 -2px; color: #5f6368; }
.omnibox > .url { flex: 1; font-size: 13px; margin-left: -3px; }
.url b { font-weight: 400; color: #202124; }
.ext { display: flex; align-items: center; }
.ext button { width: 32px; justify-content: center; }

.bookmarks { display: flex; align-items: center; height: 35px; padding: 0 15px 2px 14px; gap: 17px; font-size: 11px; color: #202124; border-bottom: 1px solid #c5cac9; flex: none; }
.bookmarks a { gap: 8px; white-space: nowrap; }
.heart { font-size: 14px; line-height: 16px; margin-left: 5px; }
.bookmarks .all { margin-left: auto; border-left: 1px solid #bbb; padding-left: 10px; height: 16px; }
.orangeicon svg { color: #ff6c2c; }

.apphead { display: flex; align-items: center; height: 50px; padding: 0 6px 0 20px; background: #293a4a; color: #fff; flex: none; }
.apphead h1 { font-size: 18px; font-weight: 400; line-height: 24px; margin-left: 9px; padding-top: 6px; }
.apphead > svg { margin-top: 6px; }
.searchform { margin-left: auto; display: flex; align-items: center; padding-top: 2px; gap: 4px; }
.searchform select, .searchform input { height: 30px; border: 1px solid #ccc; border-radius: 2px; background: #fff; color: #555; font: 12px/18px "Open Sans", sans-serif; }
.searchform select { width: 142px; padding: 0 10px; }
.searchform input { width: 156px; }
.searchform button { height: 30px; border-radius: 2px; font-size: 12px; justify-content: center; }
.go { width: 37px; background: #428bca; }
.settings { width: 82px; margin-left: 9px; background: #fff; color: #333; gap: 3px; border: 1px solid #ccc; }

.toolbar { display: flex; height: 35px; background: #e9e9e9; border-bottom: 1px solid #c5c8ca; flex: none; }
.tool { padding: 0 13px; gap: 4px; white-space: nowrap; }
.toolbar .off { color: #aaa; }
.sep { border-left: 1px dashed #ccc; }
.toolbar .sep { padding-left: 17px; }

.work { flex: 1; min-height: 0; display: flex; padding: 5px 6px 0 10px; gap: 15px; }
.side { width: 310px; flex: none; }
.path { display: flex; height: 34px; border: 1px solid #ccc; border-radius: 3px; }
.homebox { width: 41px; display: flex; align-items: center; justify-content: center; background: #eee; border-right: 1px solid #ccc; color: #444; }
.path input { flex: 1; min-width: 0; border: 0; padding: 1px 12px 0; font: inherit; color: #555; background: none; }
.path button { width: 44px; justify-content: center; border-left: 1px solid #ccc; }
.collapse { width: 100%; height: 34px; justify-content: center; margin: 5px 0 10px; border: 1px solid #ccc; border-radius: 3px; }
.tree li { display: flex; align-items: center; height: 22px; padding-left: 28px; }
.tree li > svg:first-child, .tree i { margin-right: 3px; }
.tree i { width: 9px; }
.tree span { margin-left: 4px; }
.tree .root { padding-left: 9px; }
.root svg + svg + svg { margin-left: 2px; }
.tree .current { font-weight: 700; }
.tree .current span { margin-left: 3px; }

.content { flex: 1; min-width: 0; display: flex; flex-direction: column; gap: 5px; }
.navbar { display: flex; height: 36px; border: 1px solid #ccc; color: #428bca; flex: none; }
.navbar .off { color: #999; }
.panel { flex: 1; min-height: 0; display: flex; flex-direction: column; border: 1px solid #ccc; border-bottom-color: #888; }
.listing { flex: 1; min-height: 0; display: flex; }
.scroller { flex: 1; min-width: 0; overflow: hidden; }
table { width: 100%; table-layout: fixed; border-collapse: separate; border-spacing: 0; font: 14px/20px "Liberation Sans", Arial, sans-serif; }
.c-icon { width: 35px; }
.c-size { width: 100px; }
.c-mod { width: 200px; }
.c-type { width: 180px; }
.c-perm { width: 89px; }
th { height: 35px; padding: 0 0 0 5px; text-align: left; font-weight: 400; color: #428bca; background: #f1f1f1; border-bottom: 1px solid #c8cbcd; white-space: nowrap; }
td { height: 31px; padding: 0 0 0 5px; background: #d7ecf9; border-bottom: 1px solid #d9dcde; white-space: nowrap; }
td:first-child { border-left: 3px solid #179bd7; padding-left: 2px; }
.vbar { width: 17px; display: flex; flex-direction: column; align-items: center; background: #f1f1f1; color: #444; padding-bottom: 7px; }
.faded { color: #999; }
.vhead { width: 100%; height: 35px; border-bottom: 1px solid #c8cbcd; margin-bottom: 7px; flex: none; }
.vtrack { flex: 1; width: 13px; margin: 5px 0 5px; min-height: 0; }
.vthumb { height: 95%; background: #c1c1c1; }
.hbar { display: flex; align-items: center; height: 17px; background: #f1f1f1; color: #444; flex: none; }
.htrack { flex: 1; padding-left: 17px; }
.hthumb { height: 13px; background: #c1c1c1; }
.hbar > svg { margin: 0 6px 0 16px; }
.corner { width: 17px; height: 17px; background: #dcdcdc; }

.taskbar {
  position: relative; display: flex; align-items: center; height: 49px; padding: 0 20px 1px; border-top: 2px solid #bdb6b8; flex: none;
  background: linear-gradient(90deg, #fbe5e5 0 40%, #e0dbd7 43% 55%, #fbe5e6 60% 100%); color: #222; font-size: 11px; line-height: 16px;
}
.weather { display: flex; align-items: center; gap: 6px; width: 332px; flex: none; }
.soft { color: #666; }
.start { flex: none; }
.search { display: flex; align-items: center; width: 218px; height: 32px; margin-left: 12px; padding: 0 1px 0 11px; border-radius: 16px; background: #fef8f8; border: 1px solid #e9d5d6; flex: none; }
.search input { flex: 1; min-width: 0; border: 0; background: none; font: 13px/18px "Open Sans", sans-serif; padding: 0 0 0 9px; }
.search input::placeholder { color: #666; }
.apps { display: flex; gap: 6px; margin-left: 7px; }
.apps button { position: relative; width: 38px; height: 38px; justify-content: center; border-radius: 4px; }
.apps .front { background: #fbf1f2; }
.run::after, .front::after { content: ""; position: absolute; bottom: 0; width: 6px; height: 3px; border-radius: 2px; background: #888; }
.front::after { width: 16px; background: #0078d4; }
.who { position: absolute; top: 2px; right: 3px; }
.tray { margin-left: auto; display: flex; align-items: center; }
.tray > svg { margin-right: 18px; }
.lang { text-align: center; margin: 0 22px 0 4px; }
.status { display: flex; gap: 7px; }
.clock { text-align: right; margin: 0 7px 0 21px; }
.tray > svg:last-child { margin-right: 0; }

.menu { position: absolute; left: 820px; top: 417px; width: 190px; padding: 6px 1px; background: #fff; border: 1px solid #c3c7bd; box-shadow: 0 3px 12px 2px #00000080; color: #000; }
.menu a { height: 29px; padding: 0 0 3px 12px; gap: 4px; }
.menu .hover { background: #d7ecf9; color: #444; }
.arrow { position: absolute; left: 980px; top: 554px; }
.assistant { position: absolute; right: 8px; top: 552px; width: 32px; height: 32px; border-radius: 50%; background: #fff; justify-content: center; box-shadow: 0 1px 6px #00000040; }
.assistant span { position: absolute; top: 0; right: 0; width: 12px; height: 12px; border-radius: 50%; background: #888; color: #fff; display: flex; align-items: center; justify-content: center; }
.bubble { position: absolute; left: 0; bottom: 48px; width: 541px; height: 22px; padding: 0 0 0 5px; background: #f7d5e3; border: solid #cfc3c9; border-width: 1px 1px 0 0; border-radius: 0 4px 0 0; font-size: 11px; line-height: 21px; color: #202124; white-space: nowrap; }
</style>
